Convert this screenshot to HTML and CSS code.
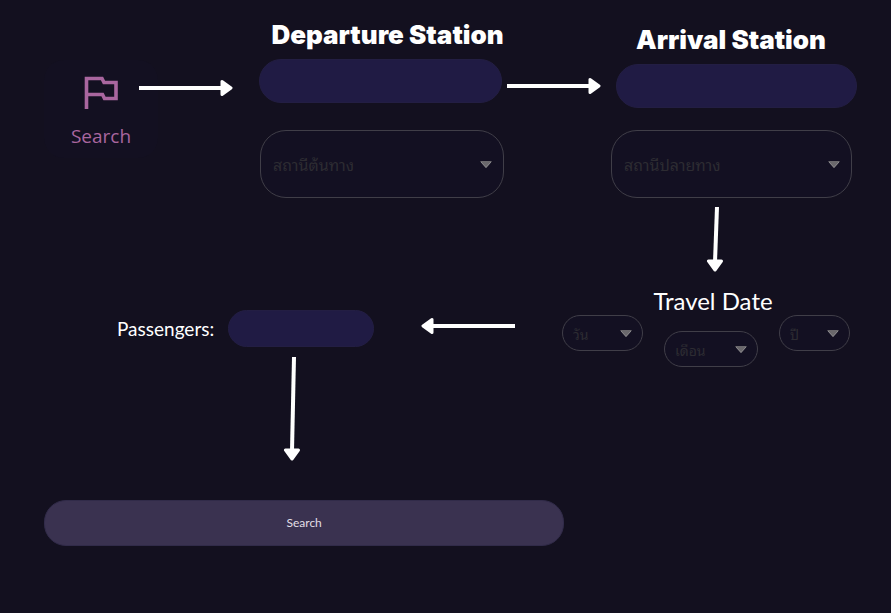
FILE: index.html
```html
<!DOCTYPE html>
<html lang="en">
<head>
<meta charset="utf-8">
<meta name="viewport" content="width=device-width, initial-scale=1">
<title>Search flow</title>
<link rel="stylesheet" href="styles.css">
</head>
<body>
<main>
  <form class="flow">
    <section class="stations">
      <a class="tile" href="#search">
        <svg class="flag" viewBox="0 0 34 34" aria-hidden="true"><path d="M2.500 33V2.500H18L20 6.500H32V22.500H20.500L18.500 18.500H2.500" fill="none" stroke="currentColor" stroke-width="3.6"/></svg>
        <span>Search</span>
      </a>
      <svg class="arrow arrow-first" viewBox="0 0 94 18" aria-hidden="true"><path d="M0 9H84" stroke-width="4"/><path class="head" d="M83 2.500V15.500L92 9Z"/></svg>
      <div class="station">
        <label class="station-title" for="departure">Departure Station</label>
        <input class="pill" id="departure" type="text">
        <div class="picker picker-large">
          <select aria-label="สถานีต้นทาง"><option>สถานีต้นทาง</option></select>
          <svg class="caret" viewBox="0 0 12 7" aria-hidden="true"><path d="M0 0H12L6 7Z"/><path class="edge" d="M1 1L6 6.500L11 1"/></svg>
        </div>
      </div>
      <svg class="arrow arrow-second" viewBox="0 0 94 18" aria-hidden="true"><path d="M0 9H84" stroke-width="4"/><path class="head" d="M83 2.500V15.500L92 9Z"/></svg>
      <div class="station station-arrival">
        <label class="station-title" for="arrival">Arrival Station</label>
        <input class="pill" id="arrival" type="text">
        <div class="picker picker-large">
          <select aria-label="สถานีปลายทาง"><option>สถานีปลายทาง</option></select>
          <svg class="caret" viewBox="0 0 12 7" aria-hidden="true"><path d="M0 0H12L6 7Z"/><path class="edge" d="M1 1L6 6.500L11 1"/></svg>
        </div>
      </div>
    </section>

    <section class="details">
      <div class="passengers">
        <div class="passenger-row">
          <label for="passengers">Passengers:</label>
          <input class="pill" id="passengers" type="text">
        </div>
        <svg class="arrow-down" width="18" height="104" viewBox="0 0 18 104" aria-hidden="true"><path d="M11 0L9 94" stroke-width="4"/><path class="head" d="M2.500 93H15.500L9 102Z"/></svg>
      </div>
      <svg class="arrow arrow-back" viewBox="0 0 94 18" aria-hidden="true"><path d="M94 9H10" stroke-width="4"/><path class="head" d="M11 2.500V15.500L2 9Z"/></svg>
      <div class="travel">
        <svg class="arrow-down" width="18" height="65" viewBox="0 0 18 65" aria-hidden="true"><path d="M11 0L9 55" stroke-width="4"/><path class="head" d="M2.500 54H15.500L9 63Z"/></svg>
        <h2>Travel Date</h2>
        <div class="dates">
          <div class="picker">
            <select aria-label="วัน"><option>วัน</option></select>
            <svg class="caret" viewBox="0 0 12 7" aria-hidden="true"><path d="M0 0H12L6 7Z"/><path class="edge" d="M1 1L6 6.500L11 1"/></svg>
          </div>
          <div class="picker month">
            <select aria-label="เดือน"><option>เดือน</option></select>
            <svg class="caret" viewBox="0 0 12 7" aria-hidden="true"><path d="M0 0H12L6 7Z"/><path class="edge" d="M1 1L6 6.500L11 1"/></svg>
          </div>
          <div class="picker">
            <select aria-label="ปี"><option>ปี</option></select>
            <svg class="caret" viewBox="0 0 12 7" aria-hidden="true"><path d="M0 0H12L6 7Z"/><path class="edge" d="M1 1L6 6.500L11 1"/></svg>
          </div>
        </div>
      </div>
    </section>

    <button class="submit" type="button">Search</button>
  </form>
</main>
</body>
</html>
```
FILE: styles.css
```css
* { box-sizing: border-box; }

body {
  margin: 0;
  min-height: 100vh;
  background: #13101f;
  color: #fff;
  font-family: Lato, sans-serif;
}

.flow { padding: 20px 34px 40px 44px; }

.stations {
  display: grid;
  grid-template-columns: minmax(0, 95fr) minmax(0, 120fr) minmax(0, 245fr) minmax(0, 107fr) minmax(0, 246fr);
  align-items: start;
}

.tile {
  display: flex;
  flex-direction: column;
  align-items: center;
  gap: 12px;
  width: 114px;
  height: 98px;
  margin-top: 40px;
  padding-top: 16px;
  border-radius: 20px;
  background: #131021;
  color: #a9669f;
  font: 19px/28px "Open Sans", sans-serif;
  text-decoration: none;
}
.flag { width: 34px; height: 34px; }

.arrow { width: 94px; height: 18px; }
.arrow path, .arrow-down path { stroke: #fff; }
.arrow .head, .arrow-down .head { fill: #fff; stroke-width: 3; stroke-linejoin: round; }
.arrow-first { margin-top: 59px; }
.arrow-second { margin: 57px 0 0 3px; }
.arrow-down { display: block; }

.station { display: flex; flex-direction: column; }
.station-title {
  align-self: center;
  margin-left: 12px;
  font: 900 26px/30px Inter, "Liberation Sans", sans-serif;
  white-space: nowrap;
}
.pill {
  width: 100%;
  height: 44px;
  margin: 9px 0 0;
  padding: 0 20px;
  border: 1px solid #231e43;
  border-radius: 22px;
  background: #201b44;
  color: #fff;
  font: inherit;
}
.station .pill { width: 99%; }
.station-arrival { padding-top: 5px; }
.station-arrival .station-title { margin: 0 6px 0 0; }
.station-arrival .pill { width: 98%; align-self: flex-end; }

.picker {
  display: grid;
  align-items: center;
}
.picker select, .caret { grid-area: 1 / 1; }
.picker select {
  width: 100%;
  height: 36px;
  margin: 0;
  padding: 0 24px 0 10px;
  appearance: none;
  border: 1px solid #403e48;
  border-radius: 18px;
  background: #131022;
  color: #2d2c32;
  font: 14px "Noto Sans Thai Looped", "Noto Looped Thai", Loma, "Noto Sans", sans-serif;
}
.caret {
  width: 12px;
  height: 7px;
  margin-right: 11px;
  justify-self: end;
  fill: #6a686c;
  pointer-events: none;
}
.caret .edge { fill: none; stroke: #8c8a8e; }
.picker-large { margin: 27px 0 0 1px; }
.picker-large select {
  height: 68px;
  padding-left: 12px;
  border-radius: 26px;
  font-size: 16px;
}
.picker-large .caret { margin-right: 12px; }
.station-arrival .picker { width: 98%; margin: 22px 0 0; }

.details {
  display: grid;
  grid-template-columns: 257fr 94fr 288fr;
  column-gap: 47px;
  align-items: start;
  margin-top: 9px;
  padding: 0 7px 0 73px;
}
.passengers { padding-top: 103px; }
.passenger-row {
  display: flex;
  align-items: center;
  gap: 14px;
  font-size: 19px;
  line-height: 24px;
}
.passenger-row .pill { flex: 1; min-width: 0; height: 37px; margin: 0; }
.passengers .arrow-down { margin: 10px 0 0 166px; }
.arrow-back { margin-top: 110px; }

.travel h2 {
  margin: 15px 0 0;
  padding-left: 14px;
  font-size: 24px;
  line-height: 28px;
  font-weight: 400;
  text-align: center;
}
.travel .arrow-down { margin: 0 0 0 50%; }
.dates {
  display: grid;
  grid-template-columns: 81fr 94fr 71fr;
  column-gap: 21px;
  align-items: start;
}
.month { margin-top: 16px; }

.submit {
  display: block;
  width: 64%;
  height: 46px;
  margin-top: 39px;
  border: 1px solid #312b49;
  border-radius: 22px;
  background: #3a3250;
  color: #e2dfe6;
  font: 12px/16px Lato, sans-serif;
}
```
